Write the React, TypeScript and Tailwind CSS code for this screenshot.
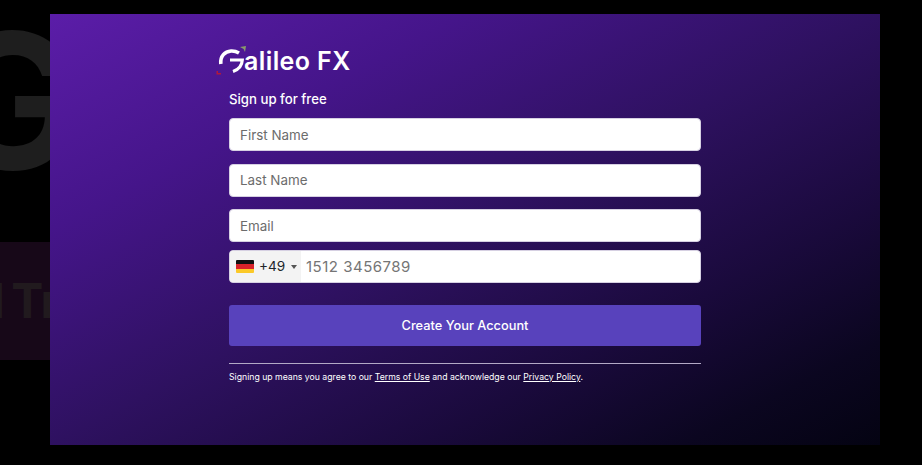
const inputClass =
  'h-[33px] w-full rounded-[4px] border border-[#d6d0e2] bg-white px-[10px] text-[13.4px] text-[#212529] placeholder:text-[#6c6c6c] outline-none'

function GermanFlag() {
  return (
    <div className="flex h-[13px] w-[18px] flex-col overflow-hidden rounded-[1px]">
      <div className="flex-1 bg-[#111]" />
      <div className="flex-1 bg-[#d8232a]" />
      <div className="flex-1 bg-[#fbc928]" />
    </div>
  )
}

function Logo() {
  return (
    <div className="ml-[-13px] flex h-[36px] items-center">
      <svg width="32" height="34" viewBox="0 0 32 34" className="mr-[-4px] shrink-0" fill="none">
        <path d="M4.8 20 C4 12 9 7.5 15 7 C18 6.8 20.5 7.5 23 9" stroke="#fff" strokeWidth="3.6" />
        <path d="M14 16 L26.3 16 C26 21.5 23 25.5 17 27.5" stroke="#fff" strokeWidth="3.2" />
        <path d="M24 3 L30 2 L29 8 L27.6 5 Z" fill="#8a9a6b" />
        <path d="M0.5 27 L2 27 L2 29 L5 29 L5 30.5 L0.5 30.5 Z" fill="#b0183c" />
      </svg>
      <span className="font-['Inter',sans-serif] text-[25px] leading-none font-semibold tracking-[0.4px] text-white">
        alileo FX
      </span>
    </div>
  )
}

export default function App() {
  return (
    <div className="relative h-[465px] w-[922px] overflow-hidden bg-black font-['Inter',sans-serif]">
      {/* page behind the dialog */}
      <div className="flex h-full flex-col">
        <div className="ml-[-60px] mt-[6px] font-['Inter',sans-serif] text-[188px] leading-[190px] font-bold text-[#1e1e1e]">
          G
        </div>
        <div className="mt-[46px] flex h-[118px] w-[50px] items-center justify-end overflow-hidden bg-[#170818]">
          <span className="mr-[-10px] shrink-0 text-[48px] font-bold text-[#211a1e] [word-spacing:-5px]">l Tr</span>
        </div>
      </div>

      <div className="absolute top-[14px] left-[50px] flex h-[431px] w-[830px] justify-center bg-[linear-gradient(to_bottom_right,#5b1da8_0%,#45158a_25%,#2e1160_50%,#1a0a3c_72%,#0b0620_88%,#040312_100%)]">
        <div className="w-[472px] pt-[29px]">
          <Logo />
          <h2 className="mt-[10px] text-[13.2px] leading-[20px] font-medium text-white">Sign up for free</h2>
          <form className="mt-[9px]">
            <div className="flex flex-col gap-[12.5px]">
              <input className={inputClass} placeholder="First Name" />
              <input className={inputClass} placeholder="Last Name" />
              <input className={inputClass} placeholder="Email" />
            </div>
            <div className="mt-[8px] flex h-[33px] overflow-hidden rounded-[4px] border border-[#d6d0e2] bg-white">
              <div className="flex w-[71px] shrink-0 items-center bg-[#f3f3f3] pl-[6px]">
                <GermanFlag />
                <span className="ml-[5px] text-[13.6px] text-[#212529]">+49</span>
                <span className="ml-[6px] h-0 w-0 border-x-[3px] border-t-[4px] border-x-transparent border-t-[#555]" />
              </div>
              <input
                className="w-full px-[5px] pt-[2px] text-[15px] tracking-[0.5px] text-[#212529] placeholder:text-[#757575] outline-none"
                placeholder="1512 3456789"
              />
            </div>
            <button
              type="button"
              className="mt-[22px] h-[41px] w-full rounded-[3px] bg-[#5842bc] text-[12.8px] font-medium text-white"
            >
              Create Your Account
            </button>
          </form>
          <div className="mt-[17px] border-t-[1.5px] border-[#b3a9c6]" />
          <p className="mt-[6px] text-[8.7px] leading-[14px] text-white">
            Signing up means you agree to our <a className="underline">Terms of Use</a> and acknowledge our{' '}
            <a className="underline">Privacy Policy</a>.
          </p>
        </div>
      </div>
    </div>
  )
}
